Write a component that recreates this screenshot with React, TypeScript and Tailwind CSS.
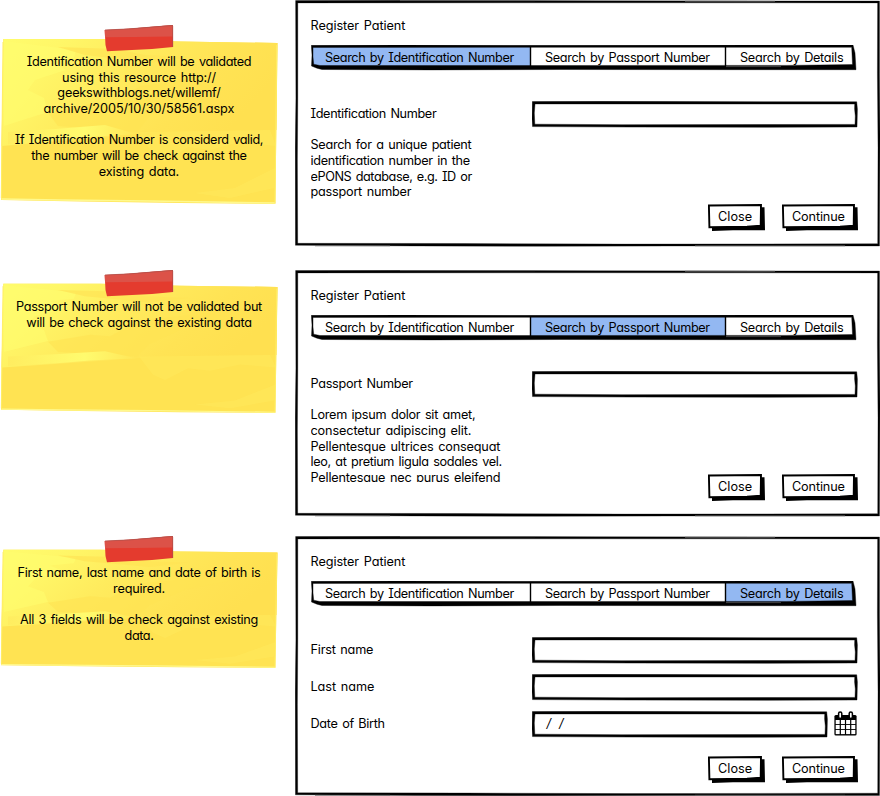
import { useLayoutEffect, useRef, useState } from "react";
import type { ReactNode } from "react";

/* One line of text whose tracking is computed so that it fills `w` pixels. */
function Line({ children, w }: { children: string; w: number }) {
  const ref = useRef<HTMLSpanElement>(null);
  const [spacing, setSpacing] = useState(0);
  useLayoutEffect(() => {
    if (!ref.current) return;
    const natural = ref.current.getBoundingClientRect().width;
    setSpacing((w + 0.8 - natural) / children.length);
  }, [children, w]);
  return (
    <span ref={ref} className="inline-block whitespace-pre [word-spacing:1.3px]" style={{ letterSpacing: `${spacing}px` }}>
      {children}
    </span>
  );
}

type TextLine = [string, number];

function Note({ height, lines, id }: { height: number; lines: TextLine[]; id: string }) {
  return (
    <div className="relative w-[280px] pt-[29px]" style={{ height }}>
      <svg
        className="absolute inset-x-0 top-[13px] w-[280px]"
        style={{ height: height - 12 }}
        viewBox="0 0 280 166"
        preserveAspectRatio="none"
        aria-hidden="true"
      >
        <defs>
          <linearGradient id={`${id}-paper`} x1="0" y1="0" x2="1" y2="0.35">
            <stop offset="0" stopColor="#fffc6c" />
            <stop offset="0.2" stopColor="#fff768" />
            <stop offset="0.48" stopColor="#ffeb5d" />
            <stop offset="0.78" stopColor="#ffe354" />
            <stop offset="1" stopColor="#ffe050" />
          </linearGradient>
          <linearGradient id={`${id}-fold`} x1="0" y1="0" x2="1" y2="0">
            <stop offset="0" stopColor="#ffed60" />
            <stop offset="0.6" stopColor="#fffb6e" />
            <stop offset="1" stopColor="#ffe658" />
          </linearGradient>
        </defs>
        <path d="M3.3 1 L100 1 L180 3.4 L277.5 5 L275.4 166 L180 165 L80 163.5 L1 162 L1.6 105Z" fill="#ffe352" />
        <path d="M3.3 1 L100 1 L180 3.4 L277.5 5 L276.5 92 L170 93 L85 101 L1.6 108Z" fill={`url(#${id}-paper)`} />
        <path d="M4 3 L60 10 L76 12 L74 20 L50 23 L66 32 L35 42 L28 52 L44 60 L48 74 L4 88Z" fill="#fffd70" opacity=".55" />
        <path d="M48 75 L90 66 L110 68 L140 48 L205 39 L230 44 L185 57 L150 78 L137 94 L58 88Z" fill="#ffe353" opacity=".65" />
        <path d="M8 94 L55 91 L105 87 L136 96 L90 99 L60 102 L8 106Z" fill={`url(#${id}-fold)`} />
        <path d="M139 94 L270 92 L276 108 L240 104 L210 112 L188 109 L165 124 L153 117Z" fill="#ffe85b" opacity=".65" />
        <path d="M58 9 L115 11 L145 17 L190 19 L150 25 L85 17Z" fill="#ffe456" opacity=".75" />
        <path d="M195 155 L235 150 L275 130 L274 150 L230 160Z" fill="#ffe85b" opacity=".65" />
        <path d="M1.3 161 L60 162 L150 163 L275 165" fill="none" stroke="#fff98e" strokeWidth="1.5" />
        <path d="M276.7 7 L275 165 M3 4 L1.3 160" fill="none" stroke="#ffee65" />
      </svg>
      <svg className="absolute left-[104px] top-0 h-[27px] w-[70px]" viewBox="0 0 70 27" aria-hidden="true">
        <path d="M.7 5 L24 3.7 L69 0 L69 22 L48 24 L3 26.3 L1.5 20Z" fill="#e43b2e" />
        <path d="M.7 5 L24 3.7 L69 0 L68.6 11.5 L30 12 L1 12.3Z" fill="#dc5248" />
        <path d="M1 5 L25 3.9 L69 .4 M68.7 1 L68.7 22" stroke="#a9504a" strokeWidth=".7" fill="none" />
      </svg>
      <div className="relative flex w-[278px] flex-col items-center">
        {lines.map(([text, w], i) => (
          <div key={i} className="h-[15.7px] leading-[15.7px]">
            {text && <Line w={w}>{text}</Line>}
          </div>
        ))}
      </div>
    </div>
  );
}

function PanelOutline({ height }: { height: number }) {
  const b = height;
  return (
    <svg className="pointer-events-none absolute left-0 top-0 w-[585px]" style={{ height: b + 1 }} viewBox={`0 0 585 ${b + 1}`} aria-hidden="true">
      <path
        fillRule="evenodd"
        stroke="black"
        strokeWidth=".3"
        d={`M.6 .5 L120 .2 L300 .7 L584.5 1 L584.5 ${b * 0.3} L585 ${b * 0.55} L584.5 ${b} L380 ${b} L250 ${b + 0.3} L120 ${b} L.4 ${b - 0.7} L.2 ${b * 0.6} L.9 ${b * 0.4}Z
           M2.8 2.9 L2.8 ${b * 0.4} L2.4 ${b * 0.65} L2.7 ${b - 2.7} L170 ${b - 2.5} L330 ${b - 1.9} L582.7 ${b - 2.3} L583 ${b * 0.6} L582.4 ${b * 0.3} L582.6 2.9 L300 2.8Z`}
      />
      <path d={`M105 .6 H240 M390 1.3 H480 M20 ${b - 0.2} H95 M400 ${b - 0.2} H550`} stroke="#666" strokeWidth=".8" />
    </svg>
  );
}

const tabs: { label: string; textWidth: number; className: string }[] = [
  { label: "Search by Identification Number", textWidth: 188, className: "w-[220px]" },
  { label: "Search by Passport Number", textWidth: 164, className: "w-[195px]" },
  { label: "Search by Details", textWidth: 102.5, className: "w-[130px]" },
];

const tabFills = ["M1 2 H219.5 V22 H9 L1 20Z", "M219.5 2 H414.5 V22 H219.5Z", "M414.5 2 H542 L543 21 H414.5Z"];

function Tabs({ active }: { active: number }) {
  return (
    <div className="relative ml-[16px] mt-[8px] flex h-[26px] w-[546px]">
      <svg className="absolute inset-0 h-[26px] w-[546px]" viewBox="0 0 546 26" aria-hidden="true">
        <path d={tabFills[active]} fill="#93b8f2" />
        <path
          fillRule="evenodd"
          stroke="black"
          strokeWidth=".4"
          d="M.3 .3 L90 0 L250 .3 L542 0 L544 8 L545 24.7 L415 24.7 L250 24.5 L120 24.9 L11 24.5 L6 23.2 L.5 21 L1 10Z
             M2 2.4 L2 12 L2.7 19.2 L9 20.5 L219 20.5 L413 20.4 L475 20.4 L541.5 19.6 L540.7 2.3Z"
        />
        <path d="M219.5 1.5 V22 M414.5 1.5 V24" stroke="black" strokeWidth="1.4" />
        <path d="M415 21.6 H470" stroke="#555" strokeWidth=".8" />
      </svg>
      {tabs.map((tab) => (
        <button key={tab.label} type="button" className={`relative h-[25px] pl-[14px] text-left leading-[24px] ${tab.className}`}>
          <Line w={tab.textWidth}>{tab.label}</Line>
        </button>
      ))}
    </div>
  );
}

function Field({ label, labelWidth, width = 326, children }: { label: string; labelWidth: number; width?: number; children?: ReactNode }) {
  const w = width;
  return (
    <div className="flex h-[37px] items-start pl-[15.5px]">
      <label className="w-[221px] leading-[25px]">
        <Line w={labelWidth}>{label}</Line>
      </label>
      <div className="relative h-[27px] leading-[25px]" style={{ width }}>
        <svg className="absolute inset-0 h-[27px]" style={{ width: w }} viewBox={`0 0 ${w} 27`} aria-hidden="true">
          <path
            fillRule="evenodd"
            stroke="black"
            strokeWidth=".4"
            d={`M.3 .6 L70 .3 L160 .6 L${w - 1.3} .8 L${w - 0.6} 8 L${w - 1} 26 L${w - 90} 26.3 L100 26.1 L.5 25.6 L0 18Z
               M3 2.9 L2.3 12 L2.8 23.2 L90 23.7 L${w - 3} 23.4 L${w - 2.7} 15 L${w - 3.4} 8 L${w - 3.3} 3Z`}
          />
        </svg>
        {children}
      </div>
    </div>
  );
}

function SketchButton({ label, textWidth, width }: { label: string; textWidth: number; width: number }) {
  const w = width;
  return (
    <button type="button" className="relative h-[27px] pl-[10px] text-left leading-[24px]" style={{ width }}>
      <svg className="absolute inset-0 h-[27px]" style={{ width: w }} viewBox={`0 0 ${w} 27`} aria-hidden="true">
        <path d={`M4 4 L${w - 0.5} 3.2 L${w} 26.3 L25 26.2 L4 27Z`} />
        <path d={`M.9 1.5 L${w - 4} 1 L${w - 4.3} 21.6 L${w - 18} 22.6 L1.4 23.3Z`} fill="white" stroke="black" strokeWidth="1.9" />
      </svg>
      <span className="relative -top-px">
        <Line w={textWidth}>{label}</Line>
      </span>
    </button>
  );
}

function Actions() {
  return (
    <div className="flex justify-end gap-[17px] pr-[22px]">
      <SketchButton label="Close" textWidth={33.5} width={57} />
      <SketchButton label="Continue" textWidth={52} width={76} />
    </div>
  );
}

function Panel({ height, active, children }: { height: number; active: number; children: ReactNode }) {
  return (
    <section className="relative w-[585px] pt-[17px]" style={{ height }}>
      <PanelOutline height={height} />
      <h2 className="h-[20px] pl-[15.5px] leading-[17px]">
        <Line w={94}>Register Patient</Line>
      </h2>
      <Tabs active={active} />
      <div className="mt-[30px]">{children}</div>
    </section>
  );
}

/* Help copy sits in a fixed-height box; overflowing lines are clipped. */
function Help({ lines }: { lines: TextLine[] }) {
  return (
    <div className="h-[67px] pl-[15.5px]">
      <div className="-mt-px h-[75px] overflow-hidden">
        {lines.map(([text, w]) => (
          <div key={text} className="h-[15.75px] leading-[15.75px]">
            <Line w={w}>{text}</Line>
          </div>
        ))}
      </div>
    </div>
  );
}

function CalendarIcon() {
  return (
    <svg className="ml-[6px] h-[25px] w-[23px] shrink-0" viewBox="0 0 23 25" aria-hidden="true">
      <rect x=".4" y="4" width="22.2" height="20.5" rx="1.5" fill="#000" />
      {[9, 14, 19].map((y) =>
        [1.7, 6.9, 12.1, 17.3].map((x) => <rect key={`${x}-${y}`} x={x} y={y} width="4" height="4.1" fill="white" />),
      )}
      <rect x="4.6" y="1" width="3.2" height="6.4" rx="1.6" fill="white" stroke="#000" strokeWidth="1.5" />
      <rect x="15.2" y="1" width="3.2" height="6.4" rx="1.6" fill="white" stroke="#000" strokeWidth="1.5" />
    </svg>
  );
}

export default function App() {
  return (
    <main className="h-[796px] w-[880px] overflow-hidden bg-white font-['Inter','Open_Sans',sans-serif] text-[12.7px] text-black [font-feature-settings:'cv11','cv08']">
      <div className="flex h-[270px]">
        <aside className="w-[295px] pt-[25px]">
          <Note
            id="n1"
            height={178}
            lines={[
              ["Identification Number will be validated", 223.5],
              ["using this resource http://", 153],
              ["geekswithblogs.net/willemf/", 162.5],
              ["archive/2005/10/30/58561.aspx", 190],
              ["", 0],
              ["If Identification Number is considerd valid,", 247.5],
              ["the number will be check against the", 214.5],
              ["existing data.", 79.5],
            ]}
          />
        </aside>
        <Panel height={246} active={0}>
          <Field label="Identification Number" labelWidth={125} />
          <Help
            lines={[
              ["Search for a unique patient", 160],
              ["identification number in the", 158.5],
              ["ePONS database, e.g. ID or", 160.5],
              ["passport number", 100],
            ]}
          />
          <Actions />
        </Panel>
      </div>
      <div className="flex h-[266px]">
        <aside className="w-[295px]">
          <Note
            id="n2"
            height={142}
            lines={[
              ["Passport Number will not be validated but", 245],
              ["will be check against the existing data", 224.5],
            ]}
          />
        </aside>
        <Panel height={246} active={1}>
          <Field label="Passport Number" labelWidth={101.5} />
          <Help
            lines={[
              ["Lorem ipsum dolor sit amet,", 164],
              ["consectetur adipiscing elit.", 160],
              ["Pellentesque ultrices consequat", 189],
              ["leo, at pretium ligula sodales vel.", 190.5],
              ["Pellentesque nec purus eleifend", 189],
            ]}
          />
          <Actions />
        </Panel>
      </div>
      <div className="flex h-[260px]">
        <aside className="w-[295px]">
          <Note
            id="n3"
            height={131}
            lines={[
              ["First name, last name and date of birth is", 242],
              ["required.", 51],
              ["", 0],
              ["All 3 fields will be check against existing", 237],
              ["data.", 28],
            ]}
          />
        </aside>
        <Panel height={259.5} active={2}>
          <Field label="First name" labelWidth={62} />
          <Field label="Last name" labelWidth={63} />
          <div className="flex h-[45px]">
            <Field label="Date of Birth" labelWidth={73.5} width={296}>
              <span className="relative pl-[15px] italic tracking-[0.3px] whitespace-pre">/  /</span>
            </Field>
            <CalendarIcon />
          </div>
          <Actions />
        </Panel>
      </div>
    </main>
  );
}
